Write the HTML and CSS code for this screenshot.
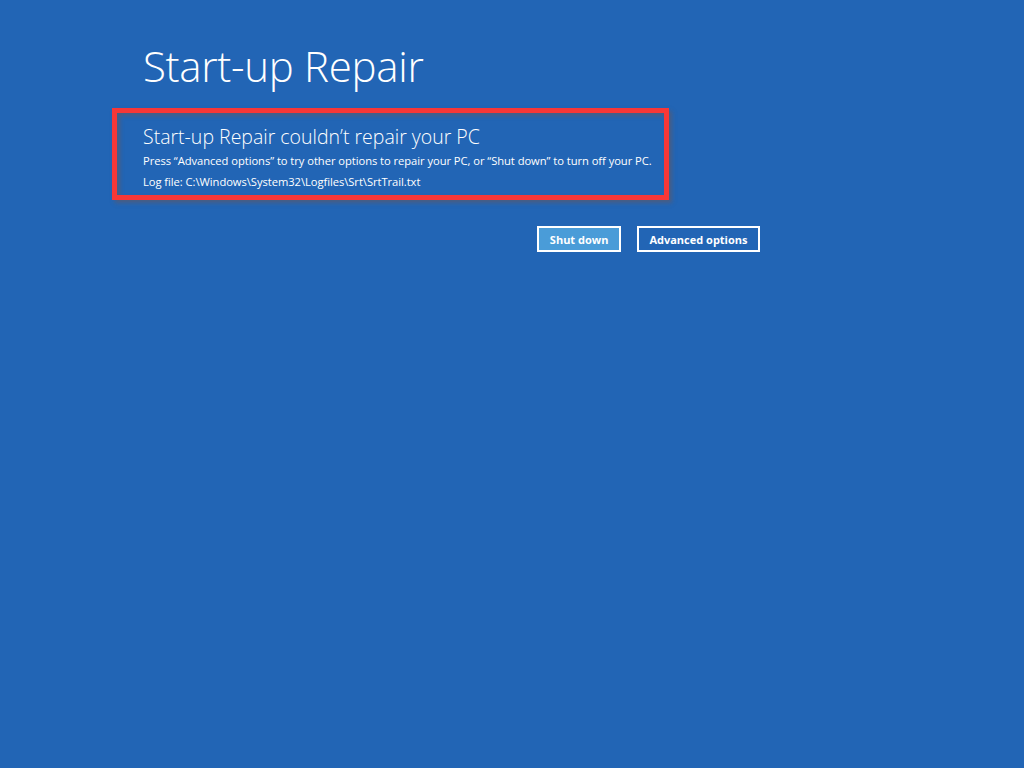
FILE: index.html
```html
<!DOCTYPE html>
<html lang="en">
<head>
    <meta charset="UTF-8">
    <meta name="viewport" content="width=device-width, initial-scale=1.0">
    <title>Start-up Repair</title>
    <link rel="stylesheet" href="styles.css">
</head>
<body>
    <div class="page">
        <h1 class="title">Start-up Repair</h1>
        <div class="message">
            <h2>Start-up Repair couldn’t repair your PC</h2>
            <p>Press “Advanced options” to try other options to repair your PC, or “Shut down” to turn off your PC.</p>
            <p>Log file: C:\Windows\System32\Logfiles\Srt\SrtTrail.txt</p>
        </div>
        <div class="controls">
            <button class="btn btn-primary">Shut down</button>
            <button class="btn">Advanced options</button>
        </div>
    </div>
</body>
</html>
```

FILE: styles.css
```css
*{
    margin: 0px;
    padding: 0px;
    box-sizing: border-box;
}

body{
    background: #2265b5;
    color: #fff;
    font-family: "Open Sans", "Noto Sans", sans-serif;
    width: 1024px;
    height: 768px;
    overflow: hidden;
}

.page{
    width: 648px;
    margin-left: 112px;
    padding-top: 38px;
}

.title{
    font-weight: 300;
    font-size: 42px;
    line-height: 56px;
    padding-left: 31px;
    margin-bottom: 14px;
    letter-spacing: -0.3px;
}

.message{
    width: 557px;
    height: 92px;
    border: 5px solid #f83737;
    padding: 11px 0 0 26px;
    box-shadow: 3px 3px 4px rgba(90, 90, 110, 0.7), inset 3px 3px 4px rgba(90, 90, 110, 0.7);
}

.message h2{
    font-weight: 300;
    font-size: 19.5px;
    line-height: 26px;
    margin-bottom: 0px;
}

.message p{
    font-size: 11.2px;
    line-height: 21px;
    letter-spacing: -0.05px;
}

.controls{
    display: flex;
    justify-content: flex-end;
    gap: 16px;
    margin-top: 26px;
}

.btn{
    height: 26px;
    padding: 0 10.5px;
    background: transparent;
    border: 2px solid #fff;
    color: #fff;
    font-family: "Open Sans", "Noto Sans", sans-serif;
    font-weight: 700;
    font-size: 11px;
}

.btn-primary{
    background: #4a9cd8;
}
```
